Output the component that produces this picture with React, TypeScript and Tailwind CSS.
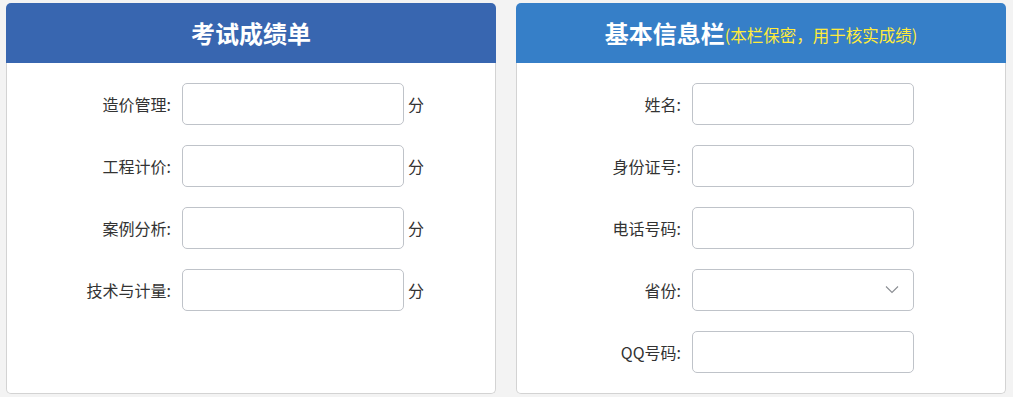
import React from "react";

type Field = { label: string; unit?: string; select?: boolean };

const scoreFields: Field[] = [
  { label: "造价管理:", unit: "分" },
  { label: "工程计价:", unit: "分" },
  { label: "案例分析:", unit: "分" },
  { label: "技术与计量:", unit: "分" },
];

const infoFields: Field[] = [
  { label: "姓名:" },
  { label: "身份证号:" },
  { label: "电话号码:" },
  { label: "省份:", select: true },
  { label: "QQ号码:" },
];

function Row({ field }: { field: Field }) {
  return (
    <div className="flex items-center">
      <label className="w-[164px] shrink-0 text-right text-[16px] leading-[20px] text-[#333]">
        {field.label}
      </label>
      <div className="relative ml-[11px] h-[42px] w-[222px] rounded-[5px] border border-[#bfc3c9] bg-white">
        {field.select ? (
          <svg
            className="absolute right-[14px] top-[15px]"
            width="14"
            height="9"
            viewBox="0 0 14 9"
            fill="none"
          >
            <path d="M1 1.5l6 6 6-6" stroke="#8a8d92" strokeWidth="1.1" />
          </svg>
        ) : (
          <input className="h-full w-full rounded-[5px] bg-transparent px-3 text-[15px] outline-none" />
        )}
      </div>
      {field.unit && (
        <span className="ml-[4px] text-[16px] leading-[20px] text-[#333]">{field.unit}</span>
      )}
    </div>
  );
}

function Card({
  color,
  title,
  note,
  fields,
}: {
  color: string;
  title: string;
  note?: string;
  fields: Field[];
}) {
  return (
    <div className="flex w-[490px] flex-col">
      <div
        className={`flex h-[60px] items-center justify-center rounded-t-[5px] ${color}`}
      >
        <span className="text-[24px] font-bold leading-[30px] text-white">{title}</span>
        {note && (
          <span className="mt-[3px] text-[16.5px] leading-[22px] text-[#ffeb3b]">{note}</span>
        )}
      </div>
      <div className="flex flex-1 flex-col gap-[20px] rounded-b-[5px] border border-t-0 border-[#d3d3d3] bg-white pb-[19px] pt-[20px]">
        {fields.map((f) => (
          <Row key={f.label} field={f} />
        ))}
      </div>
    </div>
  );
}

export default function App() {
  return (
    <div
      className="flex h-[397px] w-[1013px] items-stretch gap-[20px] bg-[#f3f3f3] pb-[3px] pl-[6px] pt-[3px]"
      style={{ fontFamily: '"Noto Sans CJK SC", "Noto Sans", sans-serif' }}
    >
      <Card color="bg-[#3866b0]" title="考试成绩单" fields={scoreFields} />
      <Card
        color="bg-[#367fc8]"
        title="基本信息栏"
        note="(本栏保密，用于核实成绩)"
        fields={infoFields}
      />
    </div>
  );
}
